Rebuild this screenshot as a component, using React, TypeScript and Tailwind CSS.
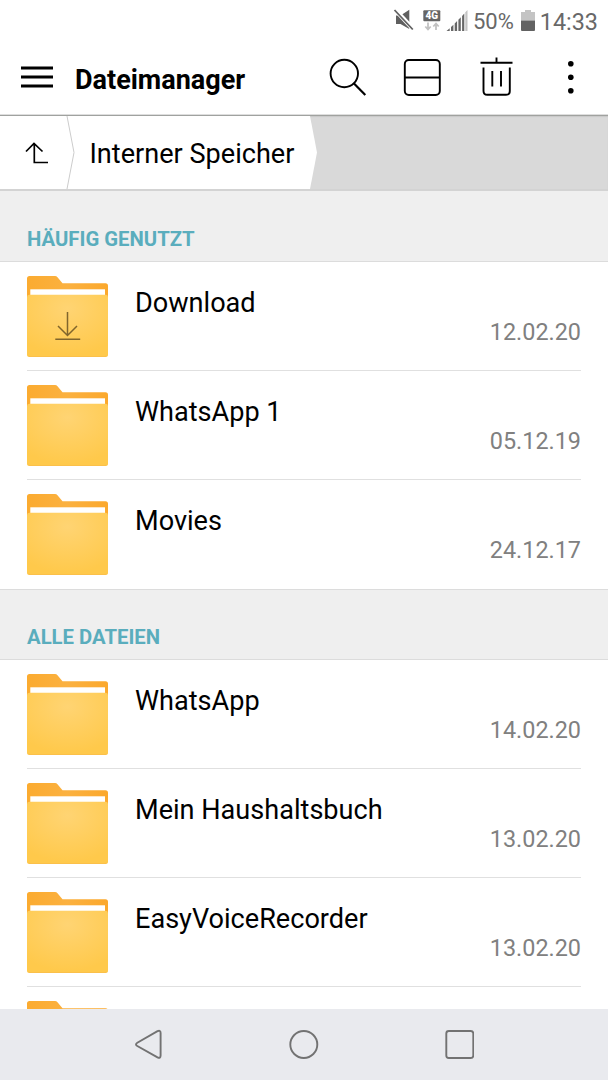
type Entry = { name: string; date: string; download?: boolean };

const frequent: Entry[] = [
  { name: "Download", date: "12.02.20", download: true },
  { name: "WhatsApp 1", date: "05.12.19" },
  { name: "Movies", date: "24.12.17" },
];

const all: Entry[] = [
  { name: "WhatsApp", date: "14.02.20" },
  { name: "Mein Haushaltsbuch", date: "13.02.20" },
  { name: "EasyVoiceRecorder", date: "13.02.20" },
  { name: "", date: "" },
];

function Folder({ download }: { download?: boolean }) {
  return (
    <svg width="81" height="82" viewBox="0 0 81 82" className="shrink-0">
      <defs>
        <radialGradient id="folderFront" cx="0.5" cy="0.22" r="0.75">
          <stop offset="0" stopColor="#ffd473" />
          <stop offset="1" stopColor="#ffc94b" />
        </radialGradient>
        <linearGradient id="folderBack" x1="0" y1="0" x2="1" y2="0">
          <stop offset="0" stopColor="#fbab30" />
          <stop offset="0.5" stopColor="#fbb140" />
          <stop offset="1" stopColor="#fba82c" />
        </linearGradient>
      </defs>
      <path d="M0 2.500Q0 0 2.500 0H28Q29.500 0 30.500 1.300L35.500 7.300H78.500Q81 7.300 81 9.800V40H0Z" fill="url(#folderBack)" />
      <rect x="3.300" y="13.300" width="74.700" height="8" fill="#fff" />
      <path d="M0 21Q0 18.700 2.500 18.700H78.500Q81 18.700 81 21V78.500Q81 81 78.500 81H2.500Q0 81 0 78.500Z" fill="url(#folderFront)" />
      <path d="M1 79.500Q1.500 80.500 3 80.500H78Q79.500 80.500 80 79.500" fill="none" stroke="#fbc04a" />
      {download && (
        <path d="M40.500 36V59.500M31 50L40.500 59.500L50 50M28.300 63.200H53.200" fill="none" stroke="#80652c" strokeWidth="1.500" />
      )}
    </svg>
  );
}

function Row({ entry, last }: { entry: Entry; last: boolean }) {
  return (
    <li className={`mx-[27px] flex h-[109px] shrink-0 border-b pt-[14px] ${last ? "border-transparent" : "border-[#e0e0e0]"}`}>
      <Folder download={entry.download} />
      <div className="flex grow flex-col pl-[27px] pt-[11px]">
        <span className="h-8 text-[27.1px] leading-8 text-black">{entry.name}</span>
        <span className="-mt-[3px] h-8 text-right text-[23.4px] leading-8 text-[#808080]">{entry.date}</span>
      </div>
    </li>
  );
}

function Section({ title, entries, first }: { title: string; entries: Entry[]; first?: boolean }) {
  return (
    <section className="shrink-0">
      <h2 className={`flex h-[71px] items-end border-b border-[#dcdcdc] bg-[#efefef] pb-[8px] pl-[27px] text-[20.3px] font-bold leading-7 text-[#5aadbd] ${first ? "" : "border-t"}`}>
        {title}
      </h2>
      <ul>
        {entries.map((entry, i) => (
          <Row key={i} entry={entry} last={i === entries.length - 1} />
        ))}
      </ul>
    </section>
  );
}

function StatusBar() {
  return (
    <div className="flex h-[42px] shrink-0 items-center justify-end pr-[10px] text-[#686868]">
      <svg width="78" height="26" viewBox="392 8 78 26">
        <path d="M396 15.500H400.500L409.300 9.700V29L400.500 24H396Z" fill="#5f5f5f" />
        <path d="M394.500 9L414 30" stroke="#fff" strokeWidth="4.500" />
        <path d="M394.500 10L412.800 29.500" stroke="#606060" strokeWidth="1.800" />
        <rect x="423.300" y="10.200" width="17" height="11" rx="1" fill="#656565" />
        <text x="431.800" y="19.200" textAnchor="middle" fontFamily="Roboto, sans-serif" fontSize="10" fontWeight="900" fill="#fff">4G</text>
        <path d="M428 22.500V29.500M425.300 26.500L428 29.500L430.700 26.500M436 30V23.500M433.300 26.500L436 23.500L438.700 26.500" fill="none" stroke="#c2c2c2" strokeWidth="1.800" />
        <path d="M446.500 31L449.700 28.200V31ZM451 27L453.400 24.700V31H451ZM454.700 23.500L457.100 21V31H454.700ZM458.400 19.700L460.800 17.200V31H458.400ZM462.100 16L464.300 13.600V31H462.100Z" fill="#676767" />
        <path d="M465.300 12.300L467.500 10V31H465.300Z" fill="#c4c4c4" />
      </svg>
      <span className="ml-[3px] pt-[2px] text-[22px] leading-6">50%</span>
      <svg width="14" height="22" viewBox="0 0 14 22" className="ml-[7px]">
        <path d="M4 0H10V2H14V10.500H0V2H4Z" fill="#c4c4c4" />
        <path d="M0 10.500H14V20Q14 21 13 21H1Q0 21 0 20Z" fill="#626262" />
      </svg>
      <span className="ml-[5px] pt-[2px] text-[23.4px] leading-6">14:33</span>
    </div>
  );
}

function AppBar() {
  return (
    <header className="flex h-[73px] shrink-0 items-center justify-between border-b border-[#dedede] pl-[21px]">
      <div className="flex items-center gap-[22px]">
        <svg width="32" height="22" viewBox="0 0 32 22" className="mb-[2px]">
          <path d="M0 2H32M0 11H32M0 20H32" stroke="#000" strokeWidth="3" />
        </svg>
        <h1 className="pt-[4px] text-[27px] font-bold leading-8 text-black">Dateimanager</h1>
      </div>
      <svg width="280" height="44" viewBox="328 56 280 44" fill="none" stroke="#000" strokeWidth="1.900">
        <circle cx="344.300" cy="73.500" r="13.700" />
        <path d="M353.500 83L365.300 95" strokeWidth="2.200" />
        <rect x="404.800" y="60" width="35" height="35" rx="4" />
        <path d="M405 77.500H440" />
        <path d="M480.500 62.700H512.500M496.500 57.500V62M483.500 67.500V91Q483.500 94.800 487.300 94.800H506Q509.800 94.800 509.800 91V67.500M492.300 71V86.500M501 71V86.500" />
        <g fill="#000" stroke="none">
          <circle cx="570.800" cy="63.800" r="2.800" />
          <circle cx="570.800" cy="77.300" r="2.800" />
          <circle cx="570.800" cy="90.800" r="2.800" />
        </g>
      </svg>
    </header>
  );
}

function Breadcrumb() {
  return (
    <nav className="flex h-[76px] shrink-0 border-b-2 border-[#d3d3d3] border-t border-t-[#a0a29f] bg-[#d9d9d9] shadow-[inset_0_1px_1px_#c8c8c8]">
      <div className="flex h-[73px] w-[317px] items-center bg-white pl-[25px] [clip-path:polygon(0_0,310px_0,317px_50%,310px_100%,0_100%)]">
        <svg width="24" height="22" viewBox="0 0 24 22" className="mt-px" fill="none" stroke="#000" strokeWidth="1.700">
          <path d="M1 9.500L9 1.500L17.500 9.500M9.300 2V20.500H23" />
        </svg>
        <svg width="10" height="73" viewBox="0 0 10 73" className="ml-[17px]" fill="none" stroke="#ccc">
          <path d="M1 0L8 36.500L1 73" />
        </svg>
        <span className="ml-[13.5px] pt-[3px] text-[27.1px] leading-8 text-black">Interner Speicher</span>
      </div>
    </nav>
  );
}

function NavBar() {
  return (
    <footer className="flex h-[71px] shrink-0 items-center justify-center bg-[#e9eaee]">
      <svg width="340" height="34" viewBox="134 1028 340 34" fill="none" stroke="#727272" strokeWidth="1.900">
        <path d="M137.300 1042.800L157.500 1031.200Q160.600 1029.800 160.600 1033V1055.500Q160.600 1058.800 157.500 1057.300L137.300 1046Q134.700 1044.400 137.300 1042.800Z" />
        <circle cx="303.800" cy="1044.500" r="13.500" />
        <rect x="446.300" y="1031" width="27" height="27" rx="2.500" />
      </svg>
    </footer>
  );
}

export default function App() {
  return (
    <div className="flex h-[1080px] w-[608px] flex-col overflow-hidden bg-white font-[Roboto,sans-serif]">
      <StatusBar />
      <AppBar />
      <Breadcrumb />
      <main className="flex min-h-0 grow flex-col overflow-hidden">
        <Section title="HÄUFIG GENUTZT" entries={frequent} first />
        <Section title="ALLE DATEIEN" entries={all} />
      </main>
      <NavBar />
    </div>
  );
}
